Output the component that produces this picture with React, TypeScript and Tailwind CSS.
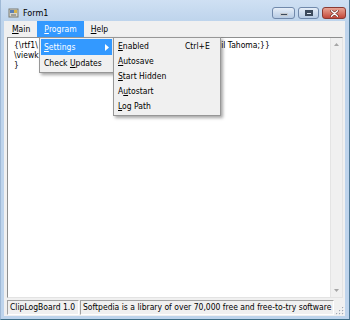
const ui = "[font-family:'DejaVu_Sans_Condensed','Liberation_Sans',Arial,sans-serif]";

const Mn = ({ c }: { c: string }) => <span className="underline underline-offset-[1px]">{c}</span>;

const CaptionButtons = () => (
  <div className="ml-auto flex items-start gap-[3px] pt-[7px] self-stretch">
    <div className="w-[23px] h-[12px] rounded-[3px] border border-[#7189ab] bg-gradient-to-b from-[#e6eef8] to-[#b7cbe4] flex items-end justify-center pb-[2px]">
      <div className="w-[8px] h-[3px] bg-[#3c4a5c] border border-white/70" />
    </div>
    <div className="w-[21px] h-[12px] rounded-[3px] border border-[#7189ab] bg-gradient-to-b from-[#e6eef8] to-[#b7cbe4] flex items-center justify-center">
      <div className="w-[8px] h-[6px] border-[2px] border-t-[3px] border-[#3c4a5c] bg-white/40" />
    </div>
    <div className="w-[24px] h-[12px] rounded-[3px] border border-[#8a3a33] bg-gradient-to-b from-[#e8a394] to-[#c2463a] flex items-center justify-center">
      <svg width="9" height="7" viewBox="0 0 9 7">
        <path d="M1.5 0.8 L7.5 6.2 M7.5 0.8 L1.5 6.2" stroke="#5a1d18" strokeWidth="2.6" strokeLinecap="round" />
        <path d="M1.5 0.8 L7.5 6.2 M7.5 0.8 L1.5 6.2" stroke="#ffffff" strokeWidth="1.5" strokeLinecap="round" />
      </svg>
    </div>
  </div>
);

const FormIcon = () => (
  <svg width="12" height="12" viewBox="0 0 12 12" className="shrink-0">
    <rect x="1" y="2" width="9" height="8" fill="#d8d8d0" stroke="#7a7a70" strokeWidth="1" />
    <rect x="2" y="3" width="4" height="3" fill="#5a7fb5" />
    <rect x="6" y="3" width="3" height="3" fill="#d6b24a" />
    <rect x="3" y="7" width="5" height="2" fill="#a0a098" />
  </svg>
);

const ScrollArrow = ({ up }: { up?: boolean }) => (
  <div className="h-[13px] flex items-center justify-center">
    <svg width="5" height="3" viewBox="0 0 5 3">
      <path d={up ? 'M0 3 L2.5 0 L5 3 Z' : 'M0 0 L2.5 3 L5 0 Z'} fill="#a6a6a6" />
    </svg>
  </div>
);

const Grip = () => (
  <svg width="9" height="9" viewBox="0 0 9 9">
    {[[7, 1], [7, 4], [4, 4], [7, 7], [4, 7], [1, 7]].map(([x, y]) => (
      <g key={`${x}-${y}`}>
        <rect x={x + 0.6} y={y + 0.6} width="1.2" height="1.2" fill="#ffffff" />
        <rect x={x} y={y} width="1.2" height="1.2" fill="#a0a7b2" />
      </g>
    ))}
  </svg>
);

const subItems: { pre: string; key: string; post: string; accel?: string }[] = [
  { pre: '', key: 'E', post: 'nabled', accel: 'Ctrl+E' },
  { pre: '', key: 'A', post: 'utosave' },
  { pre: '', key: 'S', post: 'tart Hidden' },
  { pre: 'A', key: 'u', post: 'tostart' },
  { pre: '', key: 'L', post: 'og Path' },
];

export default function App() {
  return (
    <div className={`${ui} relative w-[350px] h-[320px] overflow-hidden flex flex-col bg-[#bed4ec] border-l border-r border-b border-l-[#9fb9d6] border-r-[#4f7896] border-b-[#3f6f88] text-black text-[8.5px]`}>
      {/* title bar */}
      <div className="h-[21px] flex items-start pl-[7px] pr-[3px] bg-gradient-to-b from-[#cfe0f3] to-[#bed4ec]">
        <div className="flex items-center gap-[3px] pt-[7px]">
          <FormIcon />
          <span className="text-[9px] leading-none">Form1</span>
        </div>
        <CaptionButtons />
      </div>

      {/* client area */}
      <div className="flex-1 ml-[3px] mr-[4px] mb-[3px] bg-[#f0f0f0] flex flex-col">
        <div className="h-[16px] flex items-center pl-[1px] shrink-0">
          <div className="h-full px-[7px] flex items-center"><Mn c="M" />ain</div>
          <div className="h-full px-[7px] flex items-center bg-[#3399ff] text-white"><Mn c="P" />rogram</div>
          <div className="h-full px-[7px] flex items-center"><Mn c="H" />elp</div>
        </div>

        <div className="flex-1 ml-[3px] mr-[2px] flex border border-[#8e8f8f] border-r-[#e3e3e3] border-b-[#e3e3e3] bg-white">
          <div className="flex-1 pl-[6px] pt-[2px] leading-[10px] whitespace-nowrap overflow-hidden">
            <div>
              {'{\\rtf1\\'}
              <span className="invisible">{'ansi\\ansicpg1252\\deff0\\deflang1{\\fonttbl{\\f0\\fn'}</span>
              {'il Tahoma;}}'}
            </div>
            <div>
              {'\\viewk'}
              <span className="invisible">{'ind4\\uc1\\pard\\f0\\fs17\\par'}</span>
            </div>
            <div>{'}'}</div>
          </div>
          <div className="w-[12px] flex flex-col justify-between bg-[#f0f0f0] border-l border-[#e4e4e4]">
            <ScrollArrow up />
            <ScrollArrow />
          </div>
        </div>

        <div className="h-[17px] mt-[1px] flex items-center pl-[3px] shrink-0 text-[8.5px]">
          <div className="h-[15px] w-[72px] flex items-center pl-[2px] border border-[#a0a0a0] border-r-white border-b-white whitespace-nowrap">ClipLogBoard 1.0</div>
          <div className="h-[15px] w-[254px] ml-[1px] flex items-center pl-[2px] border border-[#a0a0a0] border-r-white border-b-white whitespace-nowrap overflow-hidden">Softpedia is a library of over 70,000 free and free-to-try software</div>
          <div className="ml-auto mr-[1px] self-end mb-[1px]"><Grip /></div>
        </div>
      </div>

      {/* Program dropdown */}
      <div className="absolute left-[38px] top-[37px] w-[75px] bg-[#f0f0f0] border border-[#979797] p-[1px] shadow-[2px_2px_3px_rgba(0,0,0,0.35)]">
        <div className="h-[16px] flex items-center pl-[3px] pr-[3px] bg-[#3399ff] text-white">
          <span><Mn c="S" />ettings</span>
          <svg width="4" height="7" viewBox="0 0 4 7" className="ml-auto"><path d="M0 0 L4 3.5 L0 7 Z" fill="#ffffff" /></svg>
        </div>
        <div className="h-[16px] flex items-center pl-[3px] whitespace-nowrap">
          Check&nbsp;<Mn c="U" />pdates
        </div>
      </div>

      {/* Settings submenu */}
      <div className="absolute left-[112px] top-[37px] w-[108px] bg-[#f0f0f0] border border-[#979797] py-[1px] shadow-[2px_2px_3px_rgba(0,0,0,0.35)]">
        {subItems.map((it) => (
          <div key={it.post} className="h-[15px] flex items-center pl-[4px] whitespace-nowrap">
            <span className="w-[67px]">{it.pre}<Mn c={it.key} />{it.post}</span>
            {it.accel && <span>{it.accel}</span>}
          </div>
        ))}
      </div>
    </div>
  );
}
